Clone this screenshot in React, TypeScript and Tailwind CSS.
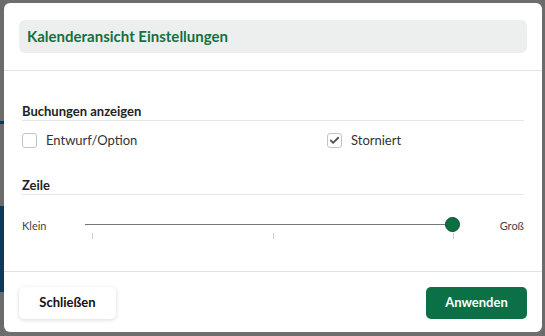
import { Check } from 'lucide-react';

const font = { fontFamily: 'Lato, "Noto Sans", sans-serif' };

const CheckItem = ({ label, checked }: { label: string; checked?: boolean }) => (
  <label className="flex items-center gap-[9px] text-[13px] leading-[19px] text-[#333]">
    <span className="flex h-[15px] w-[15px] items-center justify-center rounded-[3px] border border-[#c4c4c4] bg-white">
      {checked && <Check size={11} strokeWidth={4} className="text-[#555]" />}
    </span>
    {label}
  </label>
);

const SectionTitle = ({ children }: { children: string }) => (
  <div className="border-b border-[#e6e6e6] pb-[1px] text-[13px] leading-[16px] font-bold text-[#222]">
    {children}
  </div>
);

const App = () => {
  return (
    <div className="flex h-[336px] w-[545px] overflow-hidden bg-[#6e6e6e]" style={font}>
      <div className="flex w-[4px] flex-col">
        <div className="h-[121px] bg-[#6b6b6b]" />
        <div className="h-[3px] bg-[#0c3a5c]" />
        <div className="h-[82px] bg-[#6b6b6b]" />
        <div className="h-[86px] bg-[#0c3a5c]" />
        <div className="flex-1 bg-[#6b6b6b]" />
      </div>
      <div className="mt-[3px] flex h-[329px] w-[538px] flex-col rounded-[6px] bg-white">
        <div className="border-b border-[#e3e3e3] px-[15px] pt-[17px] pb-[17px]">
          <div className="flex h-[33px] items-center rounded-[6px] bg-[#ecefee] px-[8px] text-[15px] font-bold text-[#15703f]">
            Kalenderansicht Einstellungen
          </div>
        </div>

        <div className="flex-1 px-[18px] pt-[32px]">
          <SectionTitle>Buchungen anzeigen</SectionTitle>
          <div className="mt-[10px] flex">
            <div className="w-[305px]">
              <CheckItem label="Entwurf/Option" />
            </div>
            <CheckItem label="Storniert" checked />
          </div>

          <div className="mt-[27px]">
            <SectionTitle>Zeile</SectionTitle>
          </div>
          <div className="mt-[22px] flex items-start text-[11px] text-[#444]">
            <span className="w-[63px] pt-[1px]">Klein</span>
            <div className="flex-1">
              <div className="relative h-[16px]">
                <div className="absolute left-0 right-[7px] top-[7px] h-[1px] bg-[#777]" />
                <div className="absolute right-0 top-0 h-[15px] w-[15px] rounded-full border border-[#0c4a2c] bg-[#0b7041]" />
              </div>
              <div className="mr-[6px] ml-[7px] flex justify-between">
                <span className="h-[6px] w-[1px] bg-[#cfcfcf]" />
                <span className="h-[6px] w-[1px] bg-[#cfcfcf]" />
                <span className="h-[6px] w-[1px] bg-[#cfcfcf]" />
              </div>
            </div>
            <span className="w-[64px] pt-[1px] text-right">Groß</span>
          </div>
        </div>

        <div className="flex items-center justify-between border-t border-[#e3e3e3] px-[15px] pt-[15px] pb-[13px]">
          <button className="h-[32px] w-[97px] rounded-[5px] bg-white text-[13px] font-bold text-[#111] shadow-[0_1px_4px_rgba(0,0,0,0.15)]">
            Schließen
          </button>
          <button className="h-[32px] w-[101px] rounded-[5px] bg-[#0b7045] text-[13px] font-bold text-white">
            Anwenden
          </button>
        </div>
      </div>
      <div className="flex-1 bg-[#6b6b6b]" />
    </div>
  );
};

export default App;
